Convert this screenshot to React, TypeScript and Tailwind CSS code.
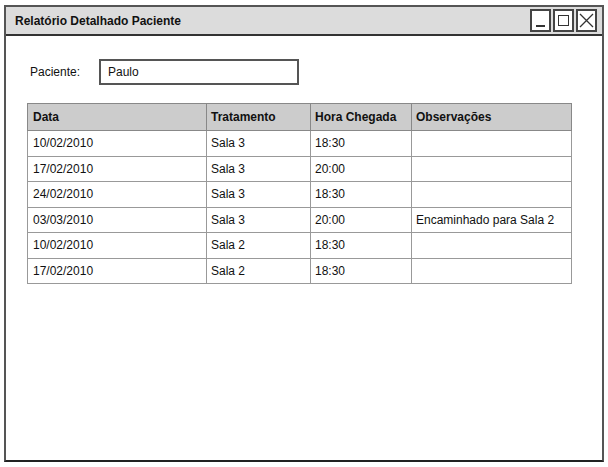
import React from 'react';

interface Visita {
  data: string;
  tratamento: string;
  hora: string;
  obs: string;
}

const visitas: Visita[] = [
  { data: '10/02/2010', tratamento: 'Sala 3', hora: '18:30', obs: '' },
  { data: '17/02/2010', tratamento: 'Sala 3', hora: '20:00', obs: '' },
  { data: '24/02/2010', tratamento: 'Sala 3', hora: '18:30', obs: '' },
  { data: '03/03/2010', tratamento: 'Sala 3', hora: '20:00', obs: 'Encaminhado para Sala 2' },
  { data: '10/02/2010', tratamento: 'Sala 2', hora: '18:30', obs: '' },
  { data: '17/02/2010', tratamento: 'Sala 2', hora: '18:30', obs: '' },
];

const WinButton: React.FC<{ children: React.ReactNode }> = ({ children }) => (
  <div className="w-[21px] h-[23px] border-2 border-[#444] bg-white flex items-center justify-center">
    {children}
  </div>
);

const App: React.FC = () => {
  return (
    <div className="w-[608px] h-[467px] bg-white pt-[5px] pl-[4px] font-['Liberation_Sans',Arial,sans-serif] text-[12px] text-[#111]">
      <div className="w-[600px] h-[457px] border-2 border-[#555] border-b-[#222] flex flex-col">
        {/* title bar */}
        <div className="h-[29px] bg-[#dcdcdc] border-b-2 border-[#333] flex items-center pl-[9px] pr-[5px]">
          <span className="font-bold text-[12px] text-[#111]">Relatório Detalhado Paciente</span>
          <div className="ml-auto flex gap-[2px]">
            <WinButton>
              <div className="w-[9px] h-[2px] bg-[#333] mt-[10px]" />
            </WinButton>
            <WinButton>
              <div className="w-[11px] h-[11px] border-[1.5px] border-[#333]" />
            </WinButton>
            <WinButton>
              <svg width="15" height="15" viewBox="0 0 15 15">
                <path d="M1 1L14 14M14 1L1 14" stroke="#333" strokeWidth="1.3" />
              </svg>
            </WinButton>
          </div>
        </div>

        <div className="pl-[21px] pt-[23px]">
          <div className="flex items-center">
            <span className="w-[72px] pl-[3px] text-[12px]">Paciente:</span>
            <div className="w-[200px] h-[26px] border-2 border-[#555] flex items-center pl-[7px]">Paulo</div>
          </div>

          <table className="mt-[18px] border-collapse w-[545px] table-fixed">
            <thead>
              <tr className="bg-[#cccccc] h-[27px]">
                <th className="w-[179px] border border-[#888] text-left font-bold pl-[5px]">Data</th>
                <th className="w-[104px] border border-[#888] text-left font-bold pl-[4px]">Tratamento</th>
                <th className="w-[101px] border border-[#888] text-left font-bold pl-[4px]">Hora Chegada</th>
                <th className="border border-[#888] text-left font-bold pl-[4px]">Observações</th>
              </tr>
            </thead>
            <tbody>
              {visitas.map((v, i) => (
                <tr key={i} className="h-[25.5px]">
                  <td className="border border-[#999] pl-[5px]">{v.data}</td>
                  <td className="border border-[#999] pl-[4px]">{v.tratamento}</td>
                  <td className="border border-[#999] pl-[4px]">{v.hora}</td>
                  <td className="border border-[#999] pl-[4px]">{v.obs}</td>
                </tr>
              ))}
            </tbody>
          </table>
        </div>
      </div>
    </div>
  );
};

export default App;
